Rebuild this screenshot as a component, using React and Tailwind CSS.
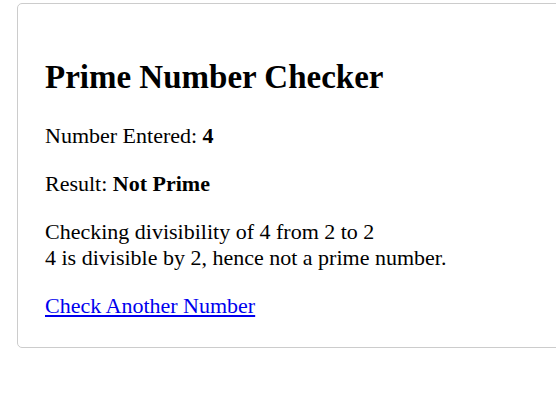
import React from 'react';

const App = () => {
  return (
    <div className="min-h-screen bg-white pt-[3px] pl-[17px] overflow-hidden" style={{ fontFamily: '"Liberation Serif", "Times New Roman", serif' }}>
      <div className="w-[600px] border border-[#cccccc] rounded-[5px] px-[27px] pt-[33px] pb-[6px] text-black">
        <h1 className="text-[33px] font-bold leading-[normal] mt-[22px] mb-[27px]">Prime Number Checker</h1>
        <p className="text-[22px] leading-[normal] my-[22px]">
          Number Entered: <strong className="font-bold">4</strong>
        </p>
        <p className="text-[22px] leading-[normal] my-[22px]">
          Result: <strong className="font-bold">Not Prime</strong>
        </p>
        <p className="text-[22px] leading-[normal] my-[22px]">
          Checking divisibility of 4 from 2 to 2<br />
          4 is divisible by 2, hence not a prime number.
        </p>
        <p className="text-[22px] leading-[normal] my-[22px]">
          <a href="#" className="text-[#0000ee] underline">Check Another Number</a>
        </p>
      </div>
    </div>
  );
};

export default App;
